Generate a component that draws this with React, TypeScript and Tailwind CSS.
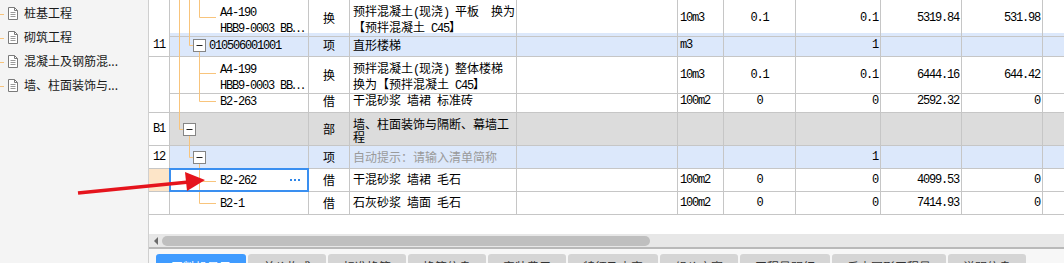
import React from "react";

type L = [number, number, number];

interface Row {
  h: number;
  no?: string;
  pl?: string;
  code?: string[];
  type: string;
  name: string[];
  hint?: boolean;
  unit?: string;
  q1?: string;
  q2?: string;
  price?: string;
  total?: string;
  bg: string;
  v: L[];
  hz: L[];
  boxes: [number, number][];
  sel?: boolean;
}

const rows: Row[] = [
  {
    h: 33, pl: "pl-[50px]", code: ["A4-190", "HBB9-0003 BB⋯"], type: "换",
    name: ["预拌混凝土(现浇) 平板  换为", "【预拌混凝土 C45】"],
    unit: "10m3", q1: "0.1", q2: "0.1", price: "5319.84", total: "531.98", bg: "bg-white",
    v: [[9.5, 0, 33], [19.5, 0, 33], [29.5, 0, 17.5]], hz: [[17.5, 29.5, 46]], boxes: [],
  },
  {
    h: 24, no: "11", pl: "pl-[39px]", code: ["010506001001"], type: "项", name: ["直形楼梯"],
    unit: "m3", q2: "1", bg: "bg-[#dce8fb]",
    v: [[9.5, 0, 24], [19.5, 0, 12.5], [29.5, 18.5, 24]], hz: [[12.5, 19.5, 23.5]], boxes: [[23.5, 6.5]],
  },
  {
    h: 33, pl: "pl-[50px]", code: ["A4-199", "HBB9-0003 BB⋯"], type: "换",
    name: ["预拌混凝土(现浇) 整体楼梯", "换为【预拌混凝土 C45】"],
    unit: "10m3", q1: "0.1", q2: "0.1", price: "6444.16", total: "644.42", bg: "bg-white",
    v: [[9.5, 0, 33], [29.5, 0, 33]], hz: [[16.5, 29.5, 46]], boxes: [],
  },
  {
    h: 23, pl: "pl-[50px]", code: ["B2-263"], type: "借", name: ["干混砂浆 墙裙 标准砖"],
    unit: "100m2", q1: "0", q2: "0", price: "2592.32", total: "0", bg: "bg-white",
    v: [[9.5, 0, 23], [29.5, 0, 11.5]], hz: [[11.5, 29.5, 46]], boxes: [],
  },
  {
    h: 33, no: "B1", type: "部", name: ["墙、柱面装饰与隔断、幕墙工", "程"], bg: "bg-[#dcdcdc]",
    v: [[9.5, 0, 16.5], [19.5, 22.5, 33]], hz: [[16.5, 9.5, 13.5]], boxes: [[13.5, 10.5]],
  },
  {
    h: 23, no: "12", type: "项", name: ["自动提示：请输入清单简称"], hint: true, q2: "1", bg: "bg-[#dce8fb]",
    v: [[19.5, 0, 11.5], [29.5, 17.5, 23]], hz: [[11.5, 19.5, 23.5]], boxes: [[23.5, 5.5]],
  },
  {
    h: 23, pl: "pl-[50px]", code: ["B2-262"], type: "借", name: ["干混砂浆 墙裙 毛石"],
    unit: "100m2", q1: "0", q2: "0", price: "4099.53", total: "0", bg: "bg-white", sel: true,
    v: [[29.5, 0, 23]], hz: [[12.5, 29.5, 46]], boxes: [],
  },
  {
    h: 23, pl: "pl-[50px]", code: ["B2-1"], type: "借", name: ["石灰砂浆 墙面 毛石"],
    unit: "100m2", q1: "0", q2: "0", price: "7414.93", total: "0", bg: "bg-white",
    v: [[29.5, 0, 11.5]], hz: [[11.5, 29.5, 46]], boxes: [],
  },
];

const tree = ["桩基工程", "砌筑工程", "混凝土及钢筋混...", "墙、柱面装饰与..."];

const tabs: [string, string][] = [
  ["工料机显示", "w-[90px]"],
  ["单价构成", "w-[78px]"],
  ["标准换算", "w-[78px]"],
  ["换算信息", "w-[78px]"],
  ["安装费用", "w-[78px]"],
  ["特征及内容", "w-[90px]"],
  ["组价方案", "w-[78px]"],
  ["工程量明细", "w-[90px]"],
  ["反查图形工程量", "w-[114px]"],
  ["说明信息", "w-[78px]"],
];

// ascii runs get the monospace face so digits sit on a 6px grid like the original
function Txt({ s }: { s: string }) {
  const parts = s.match(/[\x20-\x7e]+|[^\x20-\x7e]+/g) ?? [];
  return (
    <>
      {parts.map((p, i) =>
        /^[\x20-\x7e]/.test(p) ? (
          <span key={i} className="font-['Liberation_Mono',monospace] tracking-[-1.2px]">
            {p}
          </span>
        ) : (
          <span key={i}>{p}</span>
        )
      )}
    </>
  );
}

const cell = "border-r border-b border-[#c6c6c6] flex whitespace-pre overflow-hidden";

function DocIcon() {
  return (
    <svg width="10" height="13" viewBox="0 0 10 13" className="shrink-0">
      <path d="M0.5 0.5H6.5L9.5 3.5V12.5H0.5Z" fill="#fff" stroke="#7a7a7a" />
      <path d="M6.5 0.5V3.5H9.5" fill="none" stroke="#7a7a7a" />
      <path d="M2.5 5.5H7.5M2.5 7.5H7.5M2.5 9.5H7.5" stroke="#9a9a9a" />
    </svg>
  );
}

function TreeLines({ r }: { r: Row }) {
  return (
    <svg className="absolute left-0 top-0" width="138" height={r.h}>
      {r.v.map(([x, y1, y2], i) => (
        <line key={"v" + i} x1={x} y1={y1} x2={x} y2={y2} stroke="#f8c47c" />
      ))}
      {r.hz.map(([y, x1, x2], i) => (
        <line key={"h" + i} x1={x1} y1={y} x2={x2} y2={y} stroke="#f8c47c" />
      ))}
      {r.boxes.map(([x, y], i) => (
        <g key={"b" + i}>
          <rect x={x} y={y} width="12" height="12" fill="#fff" stroke="#858585" />
          <line x1={x + 3} y1={y + 6} x2={x + 9} y2={y + 6} stroke="#222" />
        </g>
      ))}
    </svg>
  );
}

function TableRow({ r }: { r: Row }) {
  const two = r.name.length > 1 || (r.code?.length ?? 0) > 1;
  const multi = two ? "items-start pt-[4px] leading-[13px] flex-col" : "items-center";
  return (
    <div
      className={`grid grid-cols-[21px_139px_41px_167px_161px_46px_72px_85px_81px_81px_1fr] text-black ${r.bg}`}
      style={{ height: r.h }}
    >
      <div className={`${cell} items-center justify-center ${r.sel ? "bg-[#fde5c8]" : "bg-white"}`}>
        {r.no && <Txt s={r.no} />}
      </div>
      <div className={`${cell} relative overflow-visible ${r.pl ?? ""} ${multi}`}>
        <TreeLines r={r} />
        {r.code?.map((c) => (
          <div key={c} className="relative">
            <Txt s={c} />
          </div>
        ))}
        {r.sel && (
          <>
            <div className="ml-auto mr-[8px] flex gap-[2px] relative">
              <span className="w-[2px] h-[2px] bg-[#2f86e8]" />
              <span className="w-[2px] h-[2px] bg-[#2f86e8]" />
              <span className="w-[2px] h-[2px] bg-[#2f86e8]" />
            </div>
            <div className="absolute -left-px -top-px w-[140px] h-[24px] border-2 border-[#3a8ff0]" />
          </>
        )}
      </div>
      <div className={`${cell} items-center justify-center`}>{r.type}</div>
      <div className={`${cell} pl-[3px] ${multi} ${r.hint ? "text-[#9a9a9a]" : ""}`}>
        {r.name.map((n) => (
          <div key={n}>
            <Txt s={n} />
          </div>
        ))}
      </div>
      <div className={cell} />
      <div className={`${cell} items-center pl-[2px]`}>{r.unit && <Txt s={r.unit} />}</div>
      <div className={`${cell} items-center justify-center`}>{r.q1 && <Txt s={r.q1} />}</div>
      <div className={`${cell} items-center justify-end pr-[2px]`}>{r.q2 && <Txt s={r.q2} />}</div>
      <div className={`${cell} items-center justify-end pr-[2px]`}>{r.price && <Txt s={r.price} />}</div>
      <div className={`${cell} items-center justify-end pr-[2px]`}>{r.total && <Txt s={r.total} />}</div>
      <div className="border-b border-[#c6c6c6]" />
    </div>
  );
}

export default function App() {
  return (
    <div className="relative w-[1064px] h-[263px] overflow-hidden flex bg-white font-['Noto_Sans_CJK_SC',sans-serif] text-[12px]">
      <div className="w-[149px] shrink-0 bg-[#f4f4f4] border-r border-[#cfcfcf] pt-[1px]">
        {tree.map((t) => (
          <div key={t} className="h-6 flex items-center relative">
            <span className="absolute left-0 top-[13px] w-[4px] h-px bg-[#f8c47c]" />
            <div className="ml-[8px] mr-[6px] flex">
              <DocIcon />
            </div>
            <span className="text-[#1a1a1a] whitespace-nowrap">{t}</span>
          </div>
        ))}
      </div>

      <div className="flex-1 flex flex-col min-w-0 min-h-0">
        <div className="shrink-0">
          {rows.map((r, i) => (
            <TableRow key={i} r={r} />
          ))}
        </div>
        <div className="h-[19px] shrink-0 bg-white" />
        <div className="h-[13px] shrink-0 bg-[#e7e7e7] flex items-center">
          <span className="ml-[5px] w-0 h-0 border-y-[4px] border-y-transparent border-r-[4px] border-r-[#6b6b6b]" />
          <div className="ml-[4px] w-[488px] h-[10px] rounded-full bg-[#bfbfbf]" />
        </div>
        <div className="h-[2px] shrink-0 bg-[#b9b9b9]" />
        <div className="shrink-0 h-[31px] bg-[#f7f7f7] pl-[7px] pt-[5px] flex gap-[2px] items-start">
          {tabs.map(([t, w], i) => (
            <div
              key={t}
              className={`${w} h-[26px] shrink-0 rounded-t-[3px] flex justify-center pt-[6px] leading-[14px] ${
                i === 0 ? "bg-[#3f9bff] text-white" : "bg-[#d5d5d5] text-[#333]"
              }`}
            >
              {t}
            </div>
          ))}
        </div>
      </div>

      <svg className="absolute left-0 top-0 pointer-events-none" width="1064" height="263">
        <line x1="78" y1="193" x2="189" y2="182" stroke="#e5141c" strokeWidth="3.5" />
        <polygon points="185,172 187,191 205,180" fill="#e5141c" />
      </svg>
    </div>
  );
}
